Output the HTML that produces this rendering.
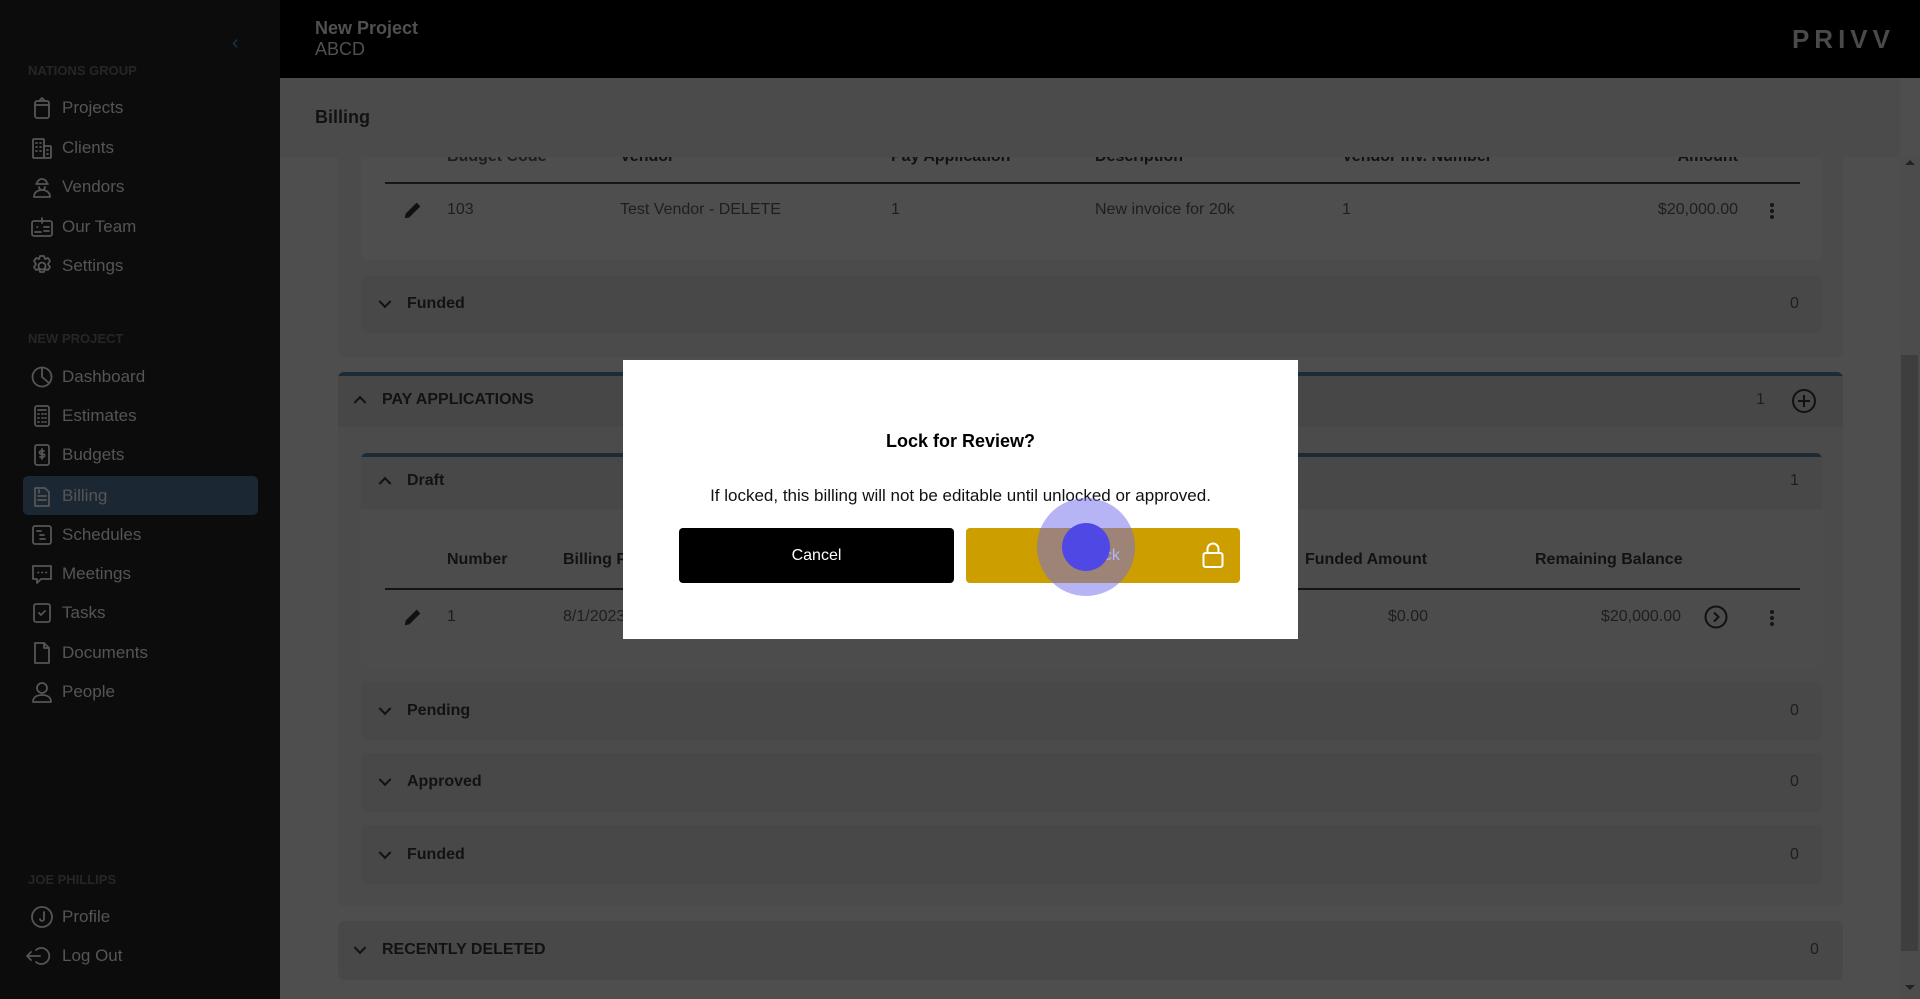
<!DOCTYPE html>
<html><head><meta charset="utf-8"><style>
*{box-sizing:border-box;margin:0;padding:0}
body{width:1920px;height:999px;overflow:hidden;background:#4e4e4e;font-family:"Liberation Sans",Arial,sans-serif;position:relative}
.a{position:absolute;white-space:nowrap}
#side{position:absolute;left:0;top:0;width:280px;height:999px;background:#0c0c0c}
.lbl{position:absolute;left:28px;font-size:13px;font-weight:bold;color:#262626}
.it{position:absolute;left:62px;font-size:17px;color:#555;transform:translateY(-50%)}
.ic{position:absolute;left:30px;width:24px;height:24px;transform:translateY(-50%)}
.ic svg{width:24px;height:24px;fill:none;stroke:#555;stroke-width:1.8;stroke-linecap:round;stroke-linejoin:round}
#hdr{position:absolute;left:280px;top:0;width:1640px;height:78px;background:#000}
.card{position:absolute;background:#4b4b4b;border-radius:6px}
.sec{position:absolute;background:#484848;border-radius:6px}
.t{position:absolute;transform:translateY(-50%);white-space:nowrap;font-size:16px;color:#1e1e1e}
.b{font-weight:bold;color:#121212}
.chev{position:absolute;width:9px;height:9px;border-right:2.5px solid #111;border-bottom:2.5px solid #111;transform:translate(-50%,-75%) rotate(45deg)}
.chev.up{transform:translate(-50%,-25%) rotate(-135deg)}
.line{position:absolute;height:1.5px;background:#151515}
.dots{position:absolute;width:4px;transform:translate(-50%,-50%)}
.dots i{display:block;width:4px;height:4px;border-radius:2px;background:#151515;margin:2px 0}
</style></head><body>

<div id="side">
  <div class="a" style="left:232px;top:32px;color:#1d3447;font-size:20px">&#8249;</div>
  <div class="lbl" style="top:63px">NATIONS GROUP</div>
  <div class="ic" style="top:108px"><svg viewBox="0 0 24 24"><rect x="5" y="5" width="14" height="17" rx="2"/><path d="M9 5l3-3 3 3M5 9h14"/></svg></div><div class="it" style="top:108px">Projects</div>
  <div class="ic" style="top:148px"><svg viewBox="0 0 24 24"><rect x="3" y="3" width="11" height="19" rx="1"/><rect x="14" y="10" width="7" height="12" rx="1"/><path d="M6 7h1M10 7h1M6 11h1M10 11h1M6 15h1M10 15h1M17 14h1M17 18h1"/></svg></div><div class="it" style="top:148px">Clients</div>
  <div class="ic" style="top:187px"><svg viewBox="0 0 24 24"><path d="M7 9a5 5 0 0110 0zM6 9h12M9 12a3 3 0 006 0M4 22c0-5 4-7 8-7s8 2 8 7z"/></svg></div><div class="it" style="top:187px">Vendors</div>
  <div class="ic" style="top:227px"><svg viewBox="0 0 24 24"><rect x="2" y="6" width="20" height="15" rx="2"/><path d="M12 3v5M5 17h6M7 12h.5M14 12h5M14 16h5"/></svg></div><div class="it" style="top:227px">Our Team</div>
  <div class="ic" style="top:266px"><svg viewBox="0 0 24 24"><circle cx="12" cy="12" r="3.5"/><path d="M10 2h4l1 3 3-1 2 3-2 3 2 3-2 3-3-1-1 3h-4l-1-3-3 1-2-3 2-3-2-3 2-3 3 1z"/></svg></div><div class="it" style="top:266px">Settings</div>

  <div class="lbl" style="top:331px">NEW PROJECT</div>
  <div class="ic" style="top:377px"><svg viewBox="0 0 24 24"><circle cx="12" cy="12" r="9.5"/><path d="M12 2.5V12l7 6" /></svg></div><div class="it" style="top:377px">Dashboard</div>
  <div class="ic" style="top:416px"><svg viewBox="0 0 24 24"><rect x="5" y="2" width="14" height="20" rx="2"/><path d="M8 6h8M8 10h1M12 10h1M15 10h1M8 14h1M12 14h1M15 14h1M8 18h1M12 18h1M15 18h1"/></svg></div><div class="it" style="top:416px">Estimates</div>
  <div class="ic" style="top:455px"><svg viewBox="0 0 24 24"><rect x="5" y="2" width="14" height="20" rx="2"/><path d="M14 8h-3a1.5 1.5 0 000 3h2a1.5 1.5 0 010 3h-3M12 6v10"/></svg></div><div class="it" style="top:455px">Budgets</div>
  <div style="position:absolute;left:23px;top:476px;width:235px;height:39px;background:#1b2834;border-radius:5px"></div>
  <div class="ic" style="top:496px"><svg viewBox="0 0 24 24"><path d="M5 4h10l4 4v14H5z"/><path d="M8 12h8M8 16h8M9 6v3"/></svg></div><div class="it" style="top:496px">Billing</div>
  <div class="ic" style="top:535px"><svg viewBox="0 0 24 24"><rect x="3" y="3" width="18" height="18" rx="2"/><path d="M7 8h4M10 12h4M10 16h5"/></svg></div><div class="it" style="top:535px">Schedules</div>
  <div class="ic" style="top:574px"><svg viewBox="0 0 24 24"><path d="M3 4h18v13H11l-4 4v-4H3z"/><path d="M8 10.5h.5M12 10.5h.5M16 10.5h.5"/></svg></div><div class="it" style="top:574px">Meetings</div>
  <div class="ic" style="top:613px"><svg viewBox="0 0 24 24"><rect x="4" y="3" width="16" height="18" rx="2"/><path d="M9 12l2 2 4-4"/></svg></div><div class="it" style="top:613px">Tasks</div>
  <div class="ic" style="top:653px"><svg viewBox="0 0 24 24"><path d="M5 2h9l5 5v15H5z"/><path d="M14 2v5h5"/></svg></div><div class="it" style="top:653px">Documents</div>
  <div class="ic" style="top:692px"><svg viewBox="0 0 24 24"><circle cx="12" cy="8" r="5"/><path d="M3 22c0-5 4-7 9-7s9 2 9 7z"/></svg></div><div class="it" style="top:692px">People</div>

  <div class="lbl" style="top:872px">JOE PHILLIPS</div>
  <div class="ic" style="top:917px"><svg viewBox="0 0 24 24"><circle cx="12" cy="12" r="10"/><path d="M14 7v7a2 2 0 01-4 0"/></svg></div><div class="it" style="top:917px">Profile</div>
  <div class="ic" style="top:956px;left:24px;width:30px"><svg viewBox="0 0 30 24" style="width:30px"><path d="M12 6a8 8 0 110 12M3 12h13M7 8l-4 4 4 4"/></svg></div><div class="it" style="top:956px">Log Out</div>
</div>

<div id="hdr">
  <div class="a" style="left:35px;top:18px;font-size:18px;font-weight:bold;color:#505050">New Project</div>
  <div class="a" style="left:35px;top:39px;font-size:18px;color:#505050">ABCD</div>
  <div class="a" style="right:25px;top:24px;font-size:26px;font-weight:bold;letter-spacing:5px;color:#4a4a4a">PRIVV</div>
</div>

<div class="card" style="left:338px;top:120px;width:1505px;height:237px"></div>
<div class="card" style="left:361px;top:120px;width:1461px;height:140px;background:#4e4e4e"></div>
<div class="t b" style="left:447px;top:157px;color:#1e1e1e">Budget Code</div>
<div class="t b" style="left:620px;top:157px">Vendor</div>
<div class="t b" style="left:891px;top:157px">Pay Application</div>
<div class="t b" style="left:1095px;top:157px">Description</div>
<div class="t b" style="left:1342px;top:157px">Vendor Inv. Number</div>
<div class="t b" style="right:182px;top:157px">Amount</div>
<div class="line" style="left:385px;top:182px;width:1415px"></div>
<svg class="a" style="left:402px;top:199px" width="22" height="22" viewBox="0 0 24 24"><path d="M3 21l1-5L16 4l4 4L8 20z" fill="#111"/></svg>
<div class="t" style="left:447px;top:210px">103</div>
<div class="t" style="left:620px;top:210px">Test Vendor - DELETE</div>
<div class="t" style="left:891px;top:210px">1</div>
<div class="t" style="left:1095px;top:210px">New invoice for 20k</div>
<div class="t" style="left:1342px;top:210px">1</div>
<div class="t" style="right:182px;top:210px">$20,000.00</div>
<div class="dots" style="left:1772px;top:211px"><i></i><i></i><i></i></div>

<div class="sec" style="left:361px;top:276px;width:1461px;height:57px"></div>
<div class="chev" style="left:385px;top:304px"></div>
<div class="t b" style="left:407px;top:304px">Funded</div>
<div class="t" style="left:1790px;top:304px">0</div>

<div style="position:absolute;top:78px;height:79px;background:#4b4b4b;left:280px;width:1620px"></div>
<div class="a" style="left:315px;top:107px;font-size:18px;font-weight:bold;color:#121212">Billing</div>

<div class="card" style="left:338px;top:372px;width:1505px;height:534px;border-top:4px solid #1d2b37"></div>
<div style="position:absolute;left:338px;top:376px;width:1505px;height:51px;background:#474747"></div>
<div class="chev up" style="left:360px;top:400px"></div>
<div class="t b" style="left:382px;top:400px">PAY APPLICATIONS</div>
<div class="t" style="left:1756px;top:400px">1</div>
<svg class="a" style="left:1791px;top:388px" width="26" height="26" viewBox="0 0 26 26"><circle cx="13" cy="13" r="11" fill="none" stroke="#111" stroke-width="2"/><path d="M13 7v12M7 13h12" stroke="#111" stroke-width="2"/></svg>

<div class="card" style="left:361px;top:453px;width:1461px;height:216px;border-top:4px solid #1d2b37;background:#4c4c4c"></div>
<div style="position:absolute;left:361px;top:457px;width:1461px;height:52px;background:#484848"></div>
<div class="chev up" style="left:385px;top:481px"></div>
<div class="t b" style="left:407px;top:481px">Draft</div>
<div class="t" style="left:1790px;top:481px">1</div>
<div class="t b" style="left:447px;top:560px">Number</div>
<div class="t b" style="left:563px;top:560px">Billing Period</div>
<div class="t b" style="left:1305px;top:560px">Funded Amount</div>
<div class="t b" style="left:1535px;top:560px">Remaining Balance</div>
<div class="line" style="left:385px;top:588px;width:1415px"></div>
<svg class="a" style="left:402px;top:606px" width="22" height="22" viewBox="0 0 24 24"><path d="M3 21l1-5L16 4l4 4L8 20z" fill="#111"/></svg>
<div class="t" style="left:447px;top:617px">1</div>
<div class="t" style="left:563px;top:617px">8/1/2023</div>
<div class="t" style="right:492px;top:617px">$0.00</div>
<div class="t" style="right:239px;top:617px">$20,000.00</div>
<svg class="a" style="left:1704px;top:605px" width="24" height="24" viewBox="0 0 24 24"><circle cx="12" cy="12" r="10.5" fill="none" stroke="#111" stroke-width="2"/><path d="M10 7.5l4.5 4.5-4.5 4.5" fill="none" stroke="#111" stroke-width="2"/></svg>
<div class="dots" style="left:1772px;top:618px"><i></i><i></i><i></i></div>

<div class="sec" style="left:361px;top:682px;width:1461px;height:58px"></div>
<div class="chev" style="left:385px;top:711px"></div><div class="t b" style="left:407px;top:711px">Pending</div><div class="t" style="left:1790px;top:711px">0</div>
<div class="sec" style="left:361px;top:753px;width:1461px;height:59px"></div>
<div class="chev" style="left:385px;top:782px"></div><div class="t b" style="left:407px;top:782px">Approved</div><div class="t" style="left:1790px;top:782px">0</div>
<div class="sec" style="left:361px;top:825px;width:1461px;height:59px"></div>
<div class="chev" style="left:385px;top:855px"></div><div class="t b" style="left:407px;top:855px">Funded</div><div class="t" style="left:1790px;top:855px">0</div>

<div class="sec" style="left:338px;top:921px;width:1505px;height:59px"></div>
<div class="chev" style="left:360px;top:950px"></div><div class="t b" style="left:382px;top:950px">RECENTLY DELETED</div><div class="t" style="left:1810px;top:950px">0</div>

<div style="position:absolute;left:1900px;top:157px;width:20px;height:842px;background:#4c4c4c"></div>
<div style="position:absolute;left:1901px;top:355px;width:17px;height:596px;background:#3e3e3e"></div>
<div class="a" style="left:1905px;top:160px;width:0;height:0;border-left:5px solid transparent;border-right:5px solid transparent;border-bottom:5px solid #222"></div>
<div class="a" style="left:1905px;top:985px;width:0;height:0;border-left:5px solid transparent;border-right:5px solid transparent;border-top:5px solid #222"></div>

<div style="position:absolute;left:623px;top:360px;width:675px;height:279px;background:#fff"></div>
<div class="a" style="left:623px;width:675px;top:431px;text-align:center;font-size:18px;font-weight:bold;color:#000">Lock for Review?</div>
<div class="a" style="left:623px;width:675px;top:486px;text-align:center;font-size:17px;color:#111">If locked, this billing will not be editable until unlocked or approved.</div>
<div style="position:absolute;left:679px;top:528px;width:275px;height:55px;background:#000;border-radius:4px;color:#fff;font-size:16px;text-align:center;line-height:55px">Cancel</div>
<div style="position:absolute;left:966px;top:528px;width:274px;height:55px;background:#cc9e00;border-radius:4px;color:#fff;font-size:16px;text-align:center;line-height:55px">Lock</div>
<svg class="a" style="left:1201px;top:541px" width="24" height="28" viewBox="0 0 24 28"><rect x="2.5" y="12" width="19" height="14" rx="2" fill="none" stroke="#fff" stroke-width="2"/><path d="M6.5 12V8a5.5 5.5 0 0111 0v4" fill="none" stroke="#fff" stroke-width="2"/></svg>
<div style="position:absolute;left:1037px;top:498px;width:98px;height:98px;border-radius:50%;background:rgba(110,105,235,0.5)"></div>
<div style="position:absolute;left:1062px;top:523px;width:48px;height:48px;border-radius:50%;background:#5048e5"></div>
</body></html>
